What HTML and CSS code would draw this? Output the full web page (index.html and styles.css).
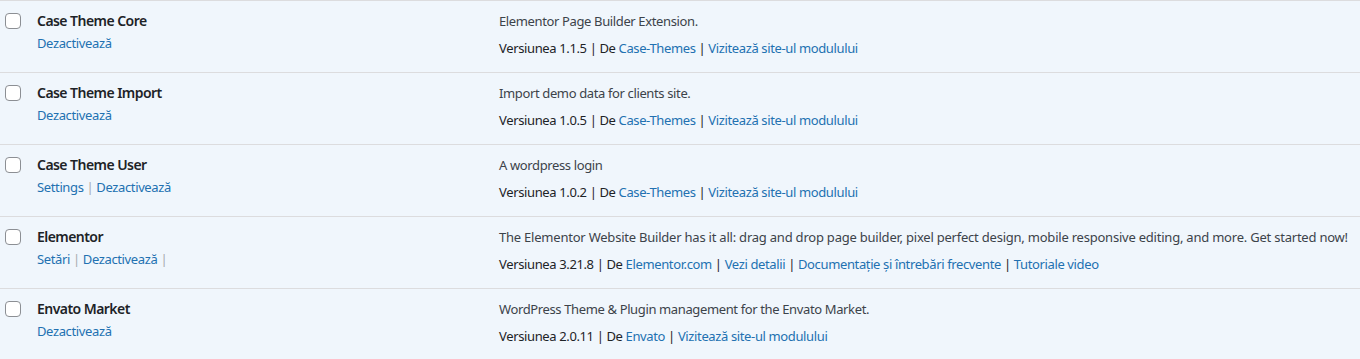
FILE: index.html
```html
<!DOCTYPE html>
<html lang="ro">
<head>
<meta charset="utf-8">
<title>Module</title>
<link rel="stylesheet" href="styles.css">
</head>
<body>
<div class="plugins">
  <div class="row">
    <div class="check"><span class="box"></span></div>
    <div class="title">
      <strong class="name">Case Theme Core</strong>
      <div class="actions"><a>Dezactivează</a></div>
    </div>
    <div class="desc">
      <p class="text">Elementor Page Builder Extension.</p>
      <p class="meta">Versiunea 1.1.5 | De <a>Case-Themes</a> | <a>Vizitează site-ul modulului</a></p>
    </div>
  </div>
  <div class="row">
    <div class="check"><span class="box"></span></div>
    <div class="title">
      <strong class="name">Case Theme Import</strong>
      <div class="actions"><a>Dezactivează</a></div>
    </div>
    <div class="desc">
      <p class="text">Import demo data for clients site.</p>
      <p class="meta">Versiunea 1.0.5 | De <a>Case-Themes</a> | <a>Vizitează site-ul modulului</a></p>
    </div>
  </div>
  <div class="row">
    <div class="check"><span class="box"></span></div>
    <div class="title">
      <strong class="name">Case Theme User</strong>
      <div class="actions"><a>Settings</a><span class="sep"> | </span><a>Dezactivează</a></div>
    </div>
    <div class="desc">
      <p class="text">A wordpress login</p>
      <p class="meta">Versiunea 1.0.2 | De <a>Case-Themes</a> | <a>Vizitează site-ul modulului</a></p>
    </div>
  </div>
  <div class="row">
    <div class="check"><span class="box"></span></div>
    <div class="title">
      <strong class="name">Elementor</strong>
      <div class="actions"><a>Setări</a><span class="sep"> | </span><a>Dezactivează</a><span class="sep"> | </span></div>
    </div>
    <div class="desc">
      <p class="text text-long">The Elementor Website Builder has it all: drag and drop page builder, pixel perfect design, mobile responsive editing, and more. Get started now!</p>
      <p class="meta">Versiunea 3.21.8 | De <a>Elementor.com</a> | <a>Vezi detalii</a> | <a>Documentație și întrebări frecvente</a> | <a>Tutoriale video</a></p>
    </div>
  </div>
  <div class="row">
    <div class="check"><span class="box"></span></div>
    <div class="title">
      <strong class="name">Envato Market</strong>
      <div class="actions"><a>Dezactivează</a></div>
    </div>
    <div class="desc">
      <p class="text">WordPress Theme &amp; Plugin management for the Envato Market.</p>
      <p class="meta">Versiunea 2.0.11 | De <a>Envato</a> | <a>Vizitează site-ul modulului</a></p>
    </div>
  </div>
</div>
</body>
</html>
```
FILE: styles.css
```css
html, body {
  margin: 0;
  padding: 0;
  background: #f0f6fc;
}
body {
  font-family: "Noto Sans", "Open Sans", "DejaVu Sans", sans-serif;
  font-size: 13px;
  letter-spacing: -0.37px;
  color: #1d2327;
  width: 1360px;
  overflow: hidden;
}
.plugins {
  border-top: 1px solid #dcdcde;
}
.row {
  display: grid;
  grid-template-columns: 37px 462px 1fr;
  height: 71px;
  border-bottom: 1px solid #dcdcde;
  background: #f0f6fc;
}
.check {
  padding: 12px 0 0 5px;
}
.box {
  display: block;
  width: 14px;
  height: 14px;
  border: 1px solid #8c8f94;
  border-radius: 4px;
  background: #fff;
}
.title {
  padding-top: 10px;
}
.name {
  display: block;
  font-size: 14px;
  font-weight: 600;
  letter-spacing: -0.55px;
  line-height: 20px;
  color: #1d2327;
}
.actions {
  margin-top: 2px;
  line-height: 20px;
  color: #a7aaad;
}
a {
  color: #2271b1;
  text-decoration: none;
}
.sep {
  color: #a7aaad;
}
.desc {
  padding-top: 10px;
}
.text {
  margin: 0;
  line-height: 20px;
  color: #3c434a;
  white-space: nowrap;
}
.text-long {
  letter-spacing: -0.22px;
}
.meta {
  margin: 7px 0 0;
  line-height: 20px;
  color: #1d2327;
  white-space: nowrap;
}
```
